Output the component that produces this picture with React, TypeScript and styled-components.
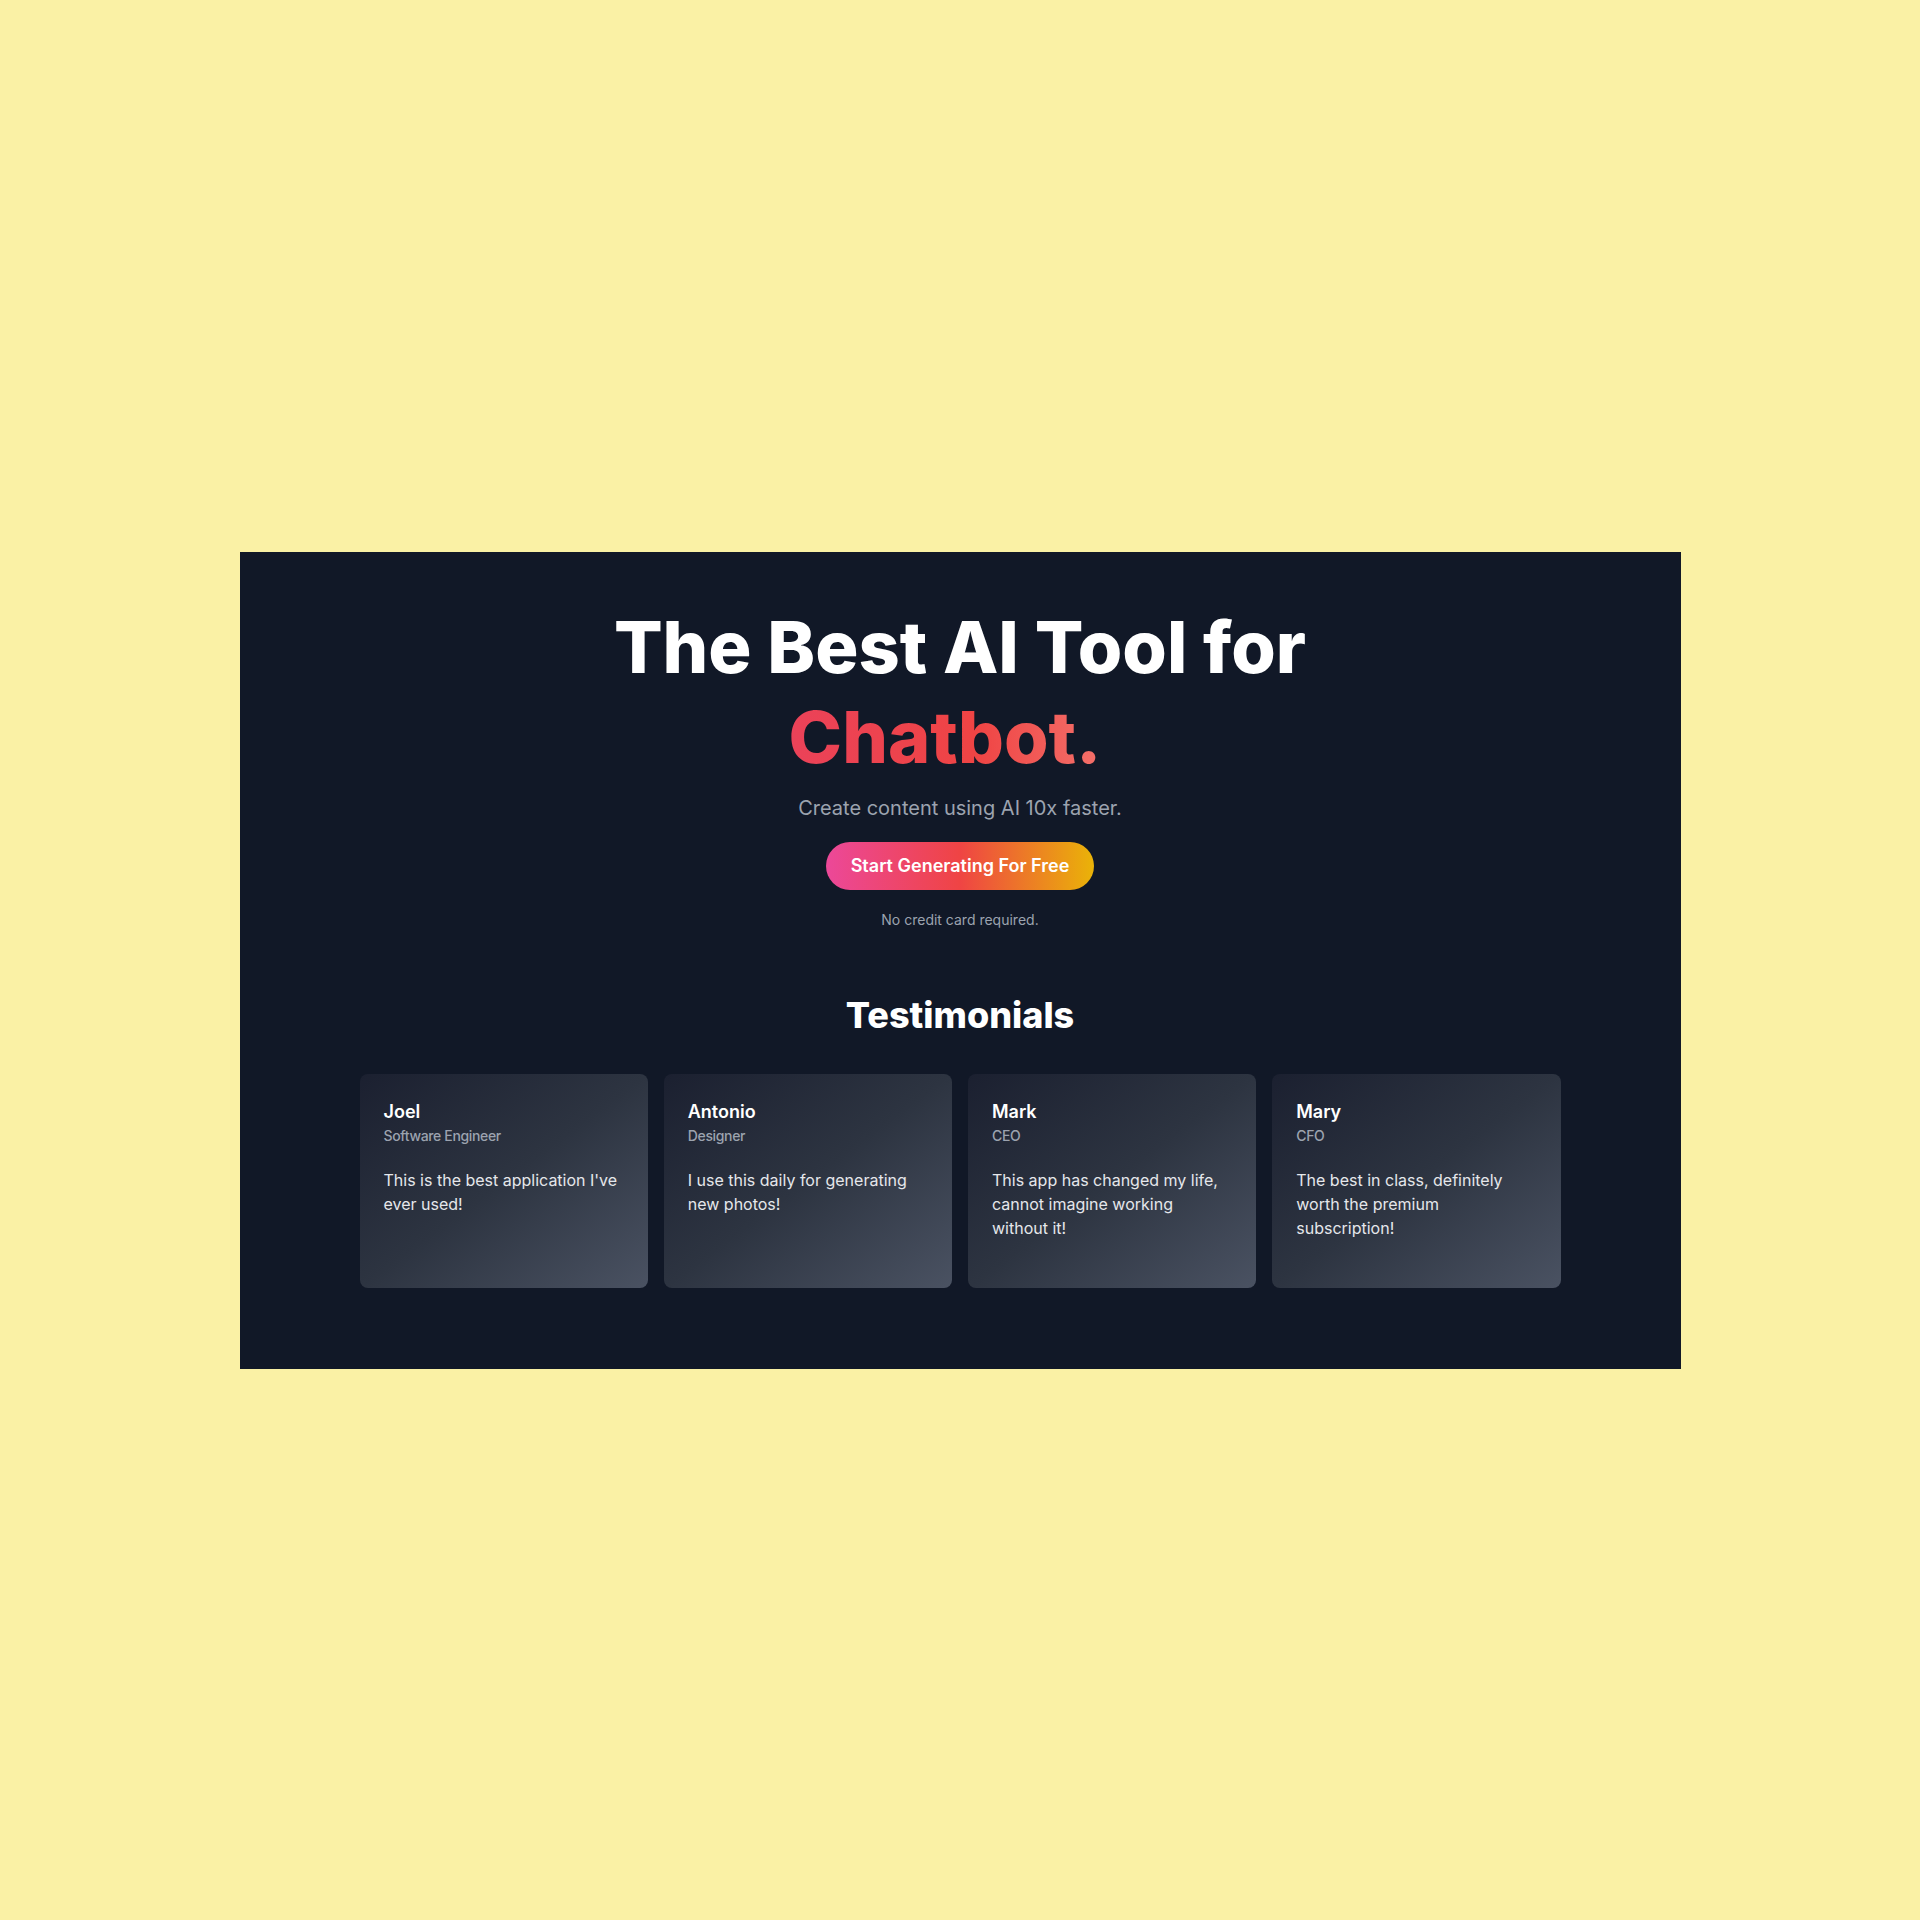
import React from "react";
import styled, { createGlobalStyle } from "styled-components";

const GlobalStyle = createGlobalStyle`
  html, body {
    margin: 0;
    padding: 0;
  }
  body {
    background: #faf1a5;
    font-family: "Inter", "Noto Sans", "Liberation Sans", sans-serif;
    -webkit-font-smoothing: antialiased;
  }
  * { box-sizing: border-box; }
`;

const Page = styled.div`
  min-height: 1920px;
  display: flex;
  align-items: center;
  justify-content: center;
`;

const Panel = styled.section`
  width: 1441px;
  background: #111827;
  padding: 50px 0 81px;
  display: flex;
  flex-direction: column;
  align-items: center;
`;

const Title = styled.h1`
  margin: 0;
  font-size: 72px;
  line-height: 90px;
  font-weight: 800;
  color: #ffffff;
  text-align: center;
`;

const Line = styled.span`
  display: block;
`;

const Accent = styled.span`
  background: linear-gradient(90deg, #eb4259 0%, #ef4444 60%, #f4706a 100%);
  -webkit-background-clip: text;
  background-clip: text;
  color: transparent;
`;

const Cursor = styled.span`
  display: inline-block;
  width: 30px;
  visibility: hidden;
`;

const Subtitle = styled.p`
  margin: 12px 0 0;
  font-size: 20px;
  line-height: 28px;
  color: #9ca3af;
`;

const CTA = styled.button`
  margin-top: 20px;
  border: none;
  border-radius: 9999px;
  padding: 10px 25px;
  font-family: inherit;
  font-size: 18px;
  line-height: 28px;
  font-weight: 600;
  color: #ffffff;
  background: linear-gradient(90deg, #ec4899 0%, #ef4444 50%, #eab308 100%);
  cursor: pointer;
`;

const Note = styled.p`
  margin: 20px 0 0;
  font-size: 14px;
  line-height: 20px;
  color: #9ca3af;
`;

const SectionTitle = styled.h2`
  margin: 65px 0 0;
  font-size: 36px;
  line-height: 40px;
  font-weight: 800;
  color: #ffffff;
`;

const Grid = styled.div`
  margin-top: 39px;
  width: 1201px;
  display: grid;
  grid-template-columns: repeat(4, 1fr);
  gap: 16px;
`;

const Card = styled.article`
  border-radius: 8px;
  padding: 24px 24px 48px;
  background: linear-gradient(to bottom right, #1b2030 0%, #2d3441 50%, #4a5262 100%);
  display: flex;
  flex-direction: column;
`;

const Name = styled.h3`
  margin: 0;
  font-size: 18px;
  line-height: 28px;
  font-weight: 600;
  color: #ffffff;
`;

const Role = styled.p`
  margin: 0;
  font-size: 14px;
  line-height: 20px;
  font-weight: 500;
  letter-spacing: -0.025em;
  color: #9ca3af;
`;

const Quote = styled.p`
  margin: 22px 0 0;
  font-size: 16px;
  line-height: 24px;
  color: #e5e7eb;
`;

const testimonials = [
  { name: "Joel", role: "Software Engineer", text: "This is the best application I've ever used!" },
  { name: "Antonio", role: "Designer", text: "I use this daily for generating new photos!" },
  { name: "Mark", role: "CEO", text: "This app has changed my life, cannot imagine working without it!" },
  { name: "Mary", role: "CFO", text: "The best in class, definitely worth the premium subscription!" },
];

export default function App() {
  return (
    <>
      <GlobalStyle />
      <Page>
        <Panel>
          <Title>
            <Line>The Best AI Tool for</Line>
            <Line>
              <Accent>Chatbot.</Accent>
              <Cursor aria-hidden="true">|</Cursor>
            </Line>
          </Title>
          <Subtitle>Create content using AI 10x faster.</Subtitle>
          <CTA>Start Generating For Free</CTA>
          <Note>No credit card required.</Note>
          <SectionTitle>Testimonials</SectionTitle>
          <Grid>
            {testimonials.map((t) => (
              <Card key={t.name}>
                <Name>{t.name}</Name>
                <Role>{t.role}</Role>
                <Quote>{t.text}</Quote>
              </Card>
            ))}
          </Grid>
        </Panel>
      </Page>
    </>
  );
}
